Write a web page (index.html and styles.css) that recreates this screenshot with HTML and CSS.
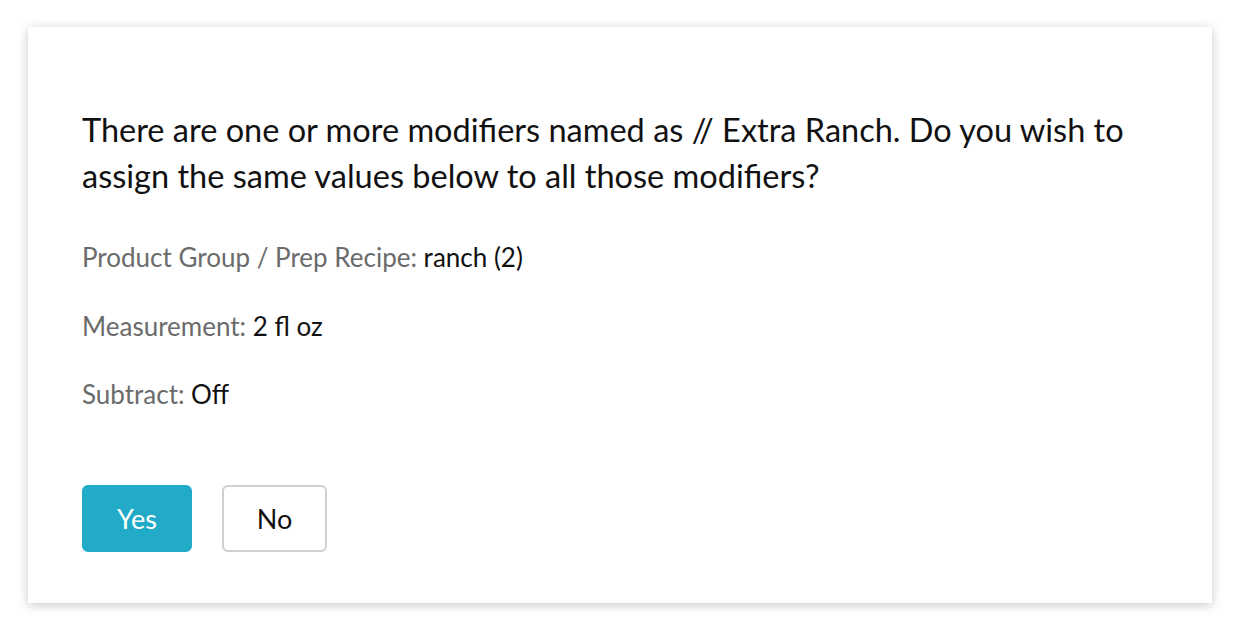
FILE: index.html
```html
<!DOCTYPE html>
<html lang="en">
<head>
    <meta charset="UTF-8">
    <meta name="viewport" content="width=device-width, initial-scale=1.0">
    <title>Apply to all modifiers</title>
    <link rel="stylesheet" href="styles.css">
</head>
<body>
    <div class="modal">
        <p class="question">There are one or more modifiers named as // Extra Ranch. Do you wish to assign the same values below to all those modifiers?</p>
        <div class="details">
            <div class="detail-row"><span class="label">Product Group / Prep Recipe:</span> ranch (2)</div>
            <div class="detail-row"><span class="label">Measurement:</span> 2 fl oz</div>
            <div class="detail-row"><span class="label">Subtract:</span> Off</div>
        </div>
        <div class="actions">
            <button class="btn btn-primary">Yes</button>
            <button class="btn btn-default">No</button>
        </div>
    </div>
</body>
</html>
```

FILE: styles.css
```css
body {
    font-family: Lato, "Noto Sans", sans-serif;
    margin: 0;
    padding: 27px 28px;
    background-color: #fff;
    color: #111;
}
.modal {
    width: 1184px;
    height: 576px;
    box-sizing: border-box;
    padding: 80px 54px 0;
    background: white;
    box-shadow: 0 2px 10px rgba(0, 0, 0, 0.22);
}
.question {
    margin: 0;
    font-size: 32.5px;
    line-height: 46px;
    max-width: 1075px;
}
.details {
    margin-top: 41px;
}
.detail-row {
    font-size: 26px;
    line-height: 34px;
    margin-bottom: 34.5px;
}
.detail-row .label {
    color: #6b6b6b;
}
.actions {
    display: flex;
    gap: 30px;
    margin-top: 74px;
}
.btn {
    height: 67px;
    padding: 0 33px;
    border-radius: 6px;
    font-family: inherit;
    font-size: 27px;
    cursor: pointer;
}
.btn-primary {
    background-color: #21abc8;
    border: 2px solid #21abc8;
    color: white;
}
.btn-default {
    background-color: white;
    border: 2px solid #cfcfcf;
    color: #111;
}
```
